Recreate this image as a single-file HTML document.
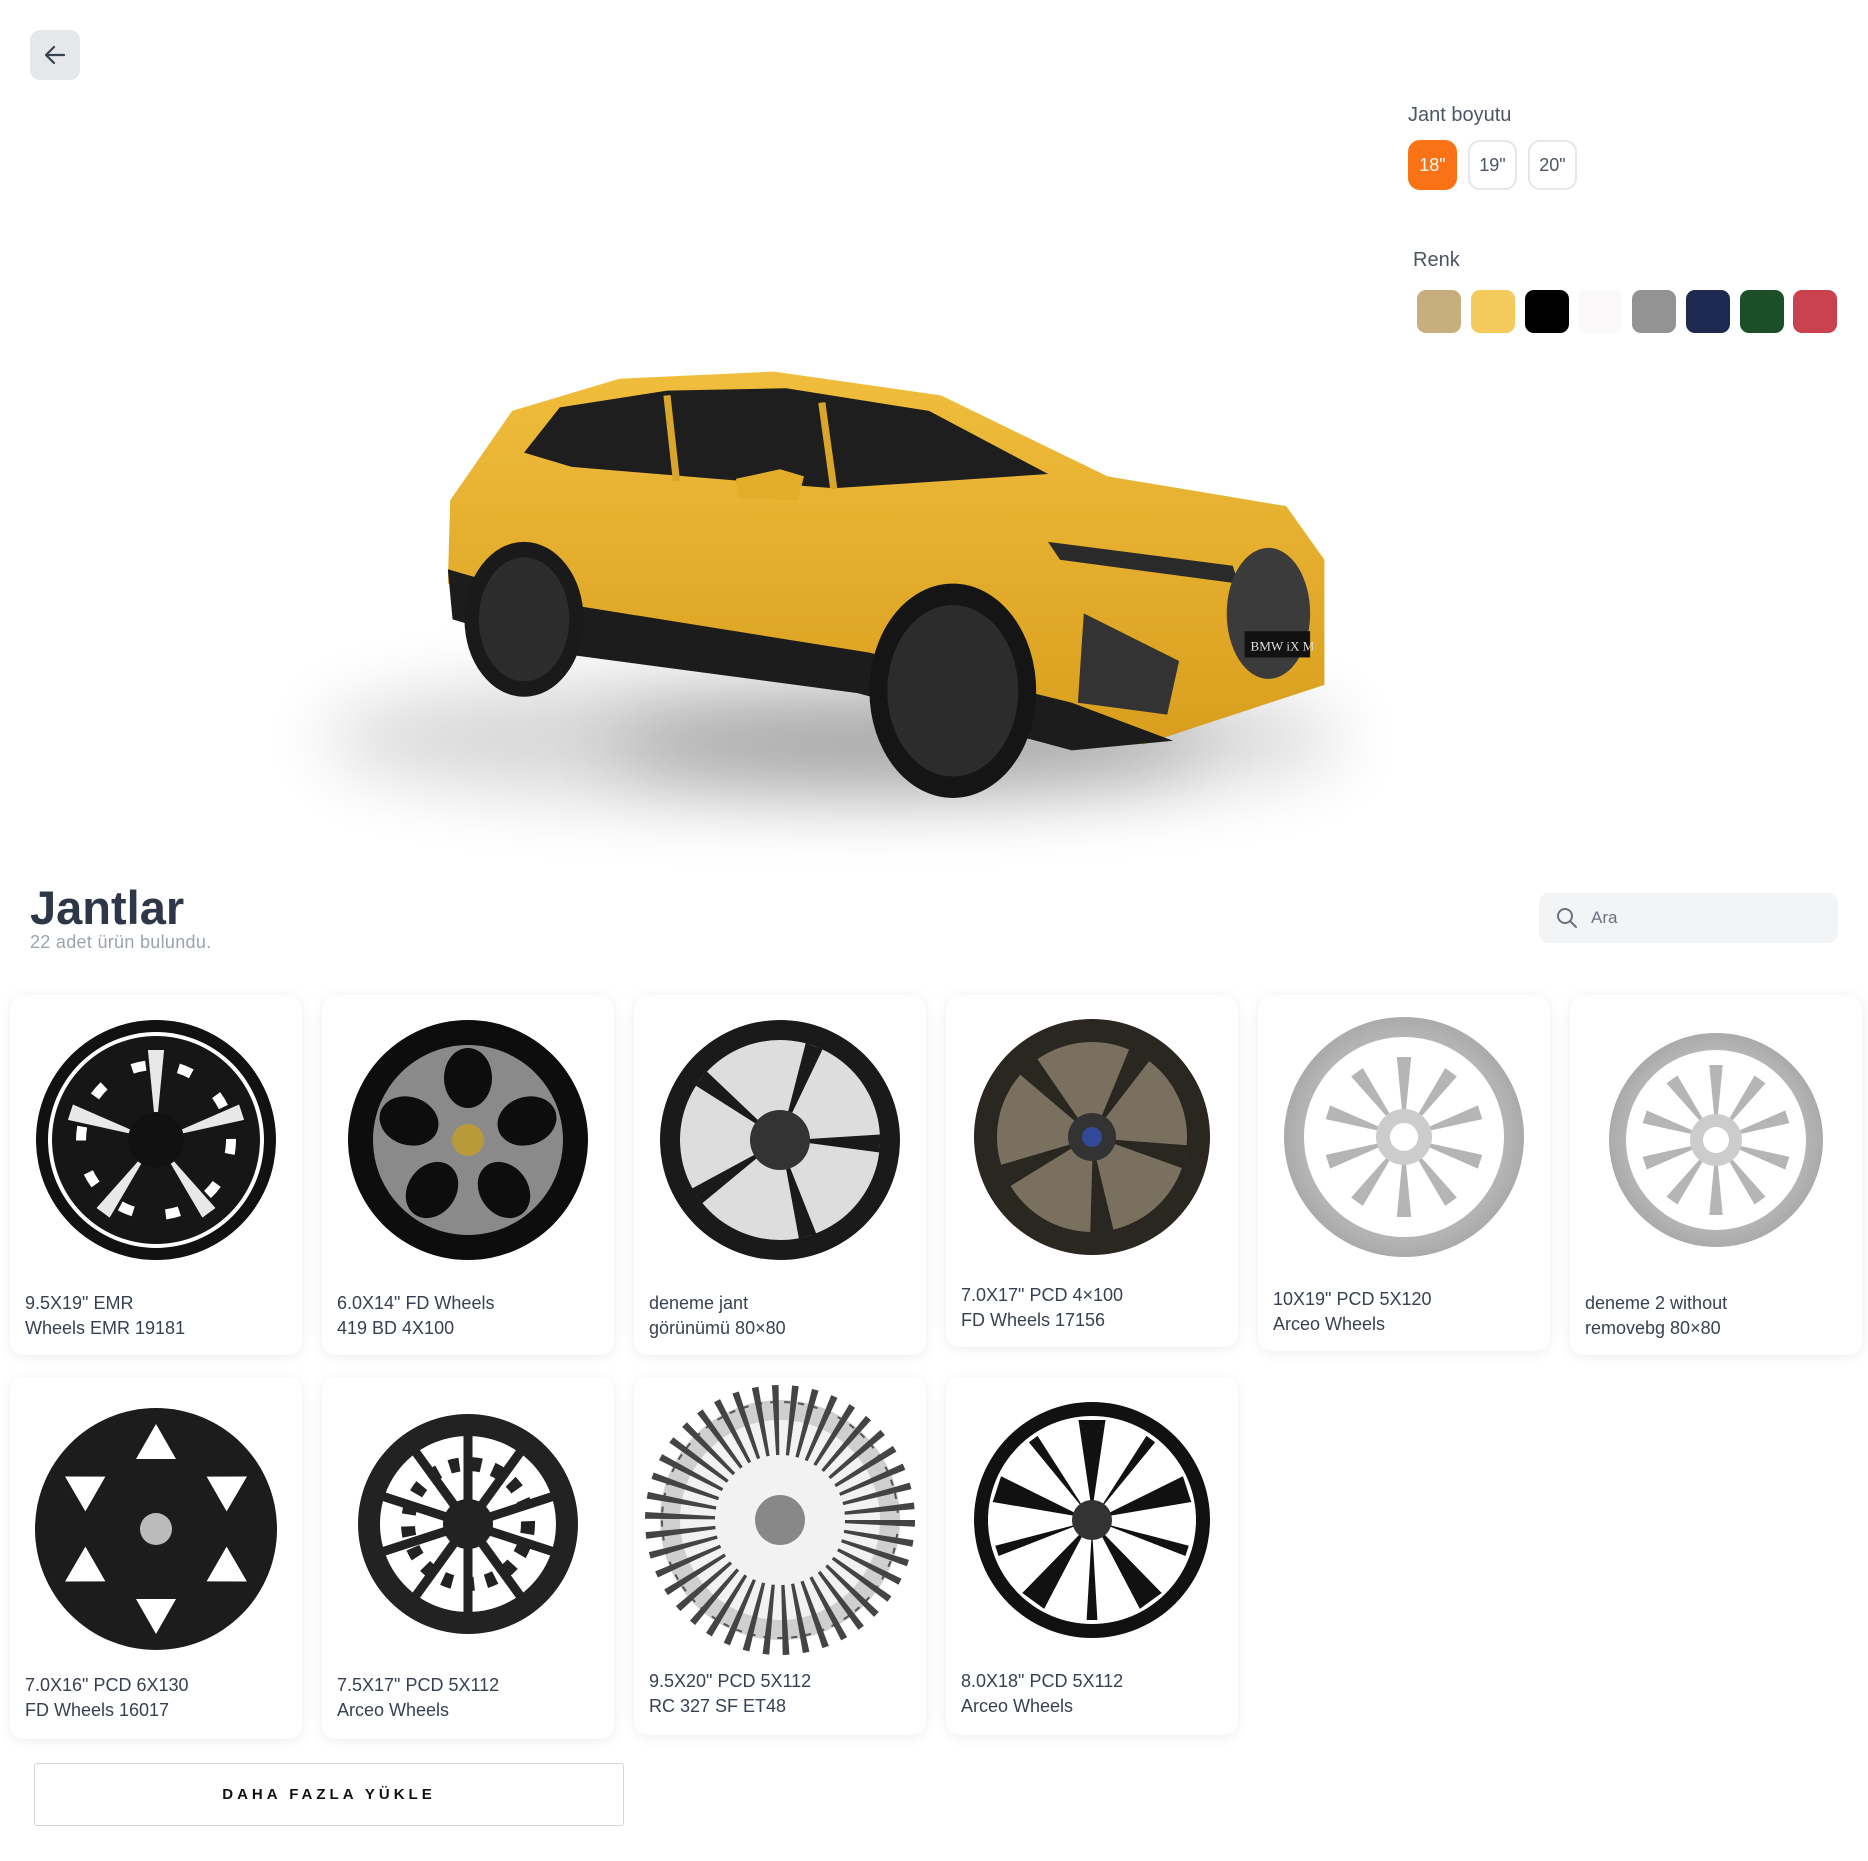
<!DOCTYPE html>
<html><head><meta charset="utf-8">
<style>
*{box-sizing:border-box;margin:0;padding:0}
body{width:1868px;height:1861px;background:#fff;font-family:"Liberation Sans",sans-serif;position:relative;overflow:hidden;color:#374151}
.abs{position:absolute}
.back{left:30px;top:30px;width:50px;height:50px;border-radius:10px;background:#e5e7eb}
.lbl{font-size:20px;color:#4b5563}
.sz{top:140px;width:49px;height:50px;border-radius:12px;border:2px solid #e5e7eb;font-size:18px;color:#4b5563;display:flex;align-items:center;justify-content:center}
.sw{top:290px;width:44px;height:43px;border-radius:9px}
.card{width:292px;background:#fff;border-radius:14px;box-shadow:0 2px 14px rgba(0,0,0,.07)}
.t{position:absolute;left:15px;font-size:18px;line-height:25px;color:#374151}
</style></head><body>
<div class="abs back"><svg width="50" height="50" viewBox="0 0 50 50"><path d="M34 25H17M24 17l-8 8 8 8" stroke="#374151" stroke-width="2.2" fill="none" stroke-linecap="round" stroke-linejoin="round"/></svg></div>

<div class="abs lbl" style="left:1408px;top:104px">Jant boyutu</div>
<div class="abs sz" style="left:1408px;background:#f97316;border-color:#f97316;color:#fff">18"</div>
<div class="abs sz" style="left:1468px">19"</div>
<div class="abs sz" style="left:1528px">20"</div>
<div class="abs lbl" style="left:1413px;top:249px">Renk</div>
<div class="abs sw" style="left:1417px;background:#c9ae7d"></div>
<div class="abs sw" style="left:1471px;background:#f5ca5c"></div>
<div class="abs sw" style="left:1525px;background:#000"></div>
<div class="abs sw" style="left:1578px;background:#faf8f8"></div>
<div class="abs sw" style="left:1632px;background:#939393"></div>
<div class="abs sw" style="left:1686px;background:#1e2a52"></div>
<div class="abs sw" style="left:1740px;background:#1c4f27"></div>
<div class="abs sw" style="left:1793px;background:#c9424e"></div>

<svg class="abs" style="left:0;top:0" width="1868" height="900" viewBox="0 0 1868 900">
<defs><filter id="bl" x="-50%" y="-100%" width="200%" height="300%"><feGaussianBlur stdDeviation="30"/></filter>
<linearGradient id="yg" x1="0" y1="0" x2="0" y2="1"><stop offset="0" stop-color="#f0bd3c"/><stop offset="1" stop-color="#d99e1e"/></linearGradient></defs>
<g transform="scale(1.191)">
<ellipse cx="700" cy="620" rx="430" ry="55" fill="#000" opacity=".16" filter="url(#bl)"/>
<ellipse cx="760" cy="625" rx="250" ry="30" fill="#000" opacity=".25" filter="url(#bl)"/>
<path d="M378 420 L430 345 L520 318 L650 312 L790 332 L930 400 L1080 425 L1112 470 L1112 575 L960 625 L880 600 L730 560 L480 520 L376 490Z" fill="url(#yg)"/>
<path d="M376 478 L480 508 L730 548 L900 590 L985 622 L900 630 L720 582 L480 550 L380 520Z" fill="#1c1c1c"/>
<path d="M440 380 L470 342 L560 328 L660 326 L780 345 L880 398 L700 410 L600 402 L480 392Z" fill="#1e1e1e"/>
<path d="M560 332 L568 404 M690 338 L700 410" stroke="#d9a52a" stroke-width="6"/>
<path d="M880 455 L1035 475 L1040 490 L890 470Z" fill="#2a2a2a"/>
<path d="M910 515 L990 555 L980 600 L905 590Z" fill="#333"/>
<ellipse cx="1065" cy="515" rx="35" ry="55" fill="#3b3b3b"/>
<rect x="1045" y="530" width="55" height="22" fill="#111"/>
<text x="1050" y="546" font-size="11" fill="#ddd" font-family="Liberation Serif">BMW iX M</text>
<path d="M618 402 L655 394 L675 400 L670 420 L620 418Z" fill="#e3ad2a"/>
<ellipse cx="440" cy="520" rx="50" ry="65" fill="#1a1a1a"/>
<ellipse cx="440" cy="520" rx="38" ry="52" fill="#2c2c2c"/>
<ellipse cx="800" cy="580" rx="70" ry="90" fill="#151515"/>
<ellipse cx="800" cy="580" rx="55" ry="72" fill="#2c2c2c"/>
</g>
</svg>

<div class="abs" style="left:30px;top:880px;font-size:47px;font-weight:bold;color:#2d3748">Jantlar</div>
<div class="abs" style="left:30px;top:932px;font-size:18px;color:#9ca3af;letter-spacing:.3px">22 adet ürün bulundu.</div>
<div class="abs" style="left:1539px;top:893px;width:299px;height:50px;border-radius:10px;background:#f3f4f6">
<svg class="abs" style="left:17px;top:14px" width="22" height="22" viewBox="0 0 22 22"><circle cx="9" cy="9" r="7" stroke="#6b7280" stroke-width="2" fill="none"/><path d="M14 14l6 6" stroke="#6b7280" stroke-width="2" stroke-linecap="round"/></svg>
<div class="abs" style="left:52px;top:15px;font-size:17px;color:#6b7280">Ara</div></div>

<svg width="0" height="0" style="position:absolute"><defs>
<g id="sp"><path d="M0 -8 L-9 -100 L9 -100Z"/></g>
</defs></svg>

<div class="abs card" style="left:10px;top:995px;height:360px"><div class="t" style="top:296px">9.5X19" EMR<br>Wheels EMR 19181</div></div>
<div class="abs card" style="left:322px;top:995px;height:360px"><div class="t" style="top:296px">6.0X14" FD Wheels<br>419 BD 4X100</div></div>
<div class="abs card" style="left:634px;top:995px;height:360px"><div class="t" style="top:296px">deneme jant<br>görünümü 80×80</div></div>
<div class="abs card" style="left:946px;top:995px;height:352px"><div class="t" style="top:288px">7.0X17" PCD 4×100<br>FD Wheels 17156</div></div>
<div class="abs card" style="left:1258px;top:995px;height:356px"><div class="t" style="top:292px">10X19" PCD 5X120<br>Arceo Wheels</div></div>
<div class="abs card" style="left:1570px;top:995px;height:360px"><div class="t" style="top:296px">deneme 2 without<br>removebg 80×80</div></div>
<div class="abs card" style="left:10px;top:1377px;height:362px"><div class="t" style="top:296px">7.0X16" PCD 6X130<br>FD Wheels 16017</div></div>
<div class="abs card" style="left:322px;top:1377px;height:362px"><div class="t" style="top:296px">7.5X17" PCD 5X112<br>Arceo Wheels</div></div>
<div class="abs card" style="left:634px;top:1377px;height:358px"><div class="t" style="top:292px">9.5X20" PCD 5X112<br>RC 327 SF ET48</div></div>
<div class="abs card" style="left:946px;top:1377px;height:358px"><div class="t" style="top:292px">8.0X18" PCD 5X112<br>Arceo Wheels</div></div>

<svg class="abs" style="left:0;top:0" width="1868" height="1861" viewBox="0 0 1868 1861">
<defs>
<radialGradient id="sil"><stop offset="0" stop-color="#eee"/><stop offset="1" stop-color="#aaa"/></radialGradient>
</defs>
<g transform="translate(156,1140)"><circle r="120" fill="#111"/><circle r="108" fill="#fff"/><circle r="104" fill="#161616"/><g fill="#fff" opacity=".9"><use href="#sp" transform="rotate(0) scale(.9)"/><use href="#sp" transform="rotate(72) scale(.9)"/><use href="#sp" transform="rotate(144) scale(.9)"/><use href="#sp" transform="rotate(216) scale(.9)"/><use href="#sp" transform="rotate(288) scale(.9)"/></g><circle r="75" fill="none" stroke="#fff" stroke-width="10" stroke-dasharray="14 33"/><circle r="28" fill="#111"/></g>
<g transform="translate(468,1140)"><circle r="120" fill="#0d0d0d"/><circle r="95" fill="#8a8a8a"/><g fill="#0d0d0d"><ellipse cx="0" cy="-62" rx="24" ry="30"/><ellipse cx="59" cy="-19" rx="24" ry="30" transform="rotate(72 59 -19)"/><ellipse cx="36" cy="50" rx="24" ry="30" transform="rotate(144 36 50)"/><ellipse cx="-36" cy="50" rx="24" ry="30" transform="rotate(216 -36 50)"/><ellipse cx="-59" cy="-19" rx="24" ry="30" transform="rotate(288 -59 -19)"/></g><circle r="16" fill="#b89a3a"/></g>
<g transform="translate(780,1140)"><circle r="120" fill="#1a1a1a"/><circle r="100" fill="#ddd"/><g fill="#1a1a1a"><use href="#sp" transform="rotate(20)"/><use href="#sp" transform="rotate(92)"/><use href="#sp" transform="rotate(164)"/><use href="#sp" transform="rotate(236)"/><use href="#sp" transform="rotate(308)"/></g><circle r="30" fill="#333"/></g>
<g transform="translate(1092,1137)"><circle r="118" fill="#2a2620"/><circle r="95" fill="#7a7060"/><g fill="#2a2620"><use href="#sp" transform="rotate(30) scale(1.3 .95)"/><use href="#sp" transform="rotate(102) scale(1.3 .95)"/><use href="#sp" transform="rotate(174) scale(1.3 .95)"/><use href="#sp" transform="rotate(246) scale(1.3 .95)"/><use href="#sp" transform="rotate(318) scale(1.3 .95)"/></g><circle r="24" fill="#333"/><circle r="10" fill="#334a9a"/></g>
<g transform="translate(1404,1137)"><circle r="120" fill="url(#sil)"/><circle r="100" fill="#fff"/><g fill="#b5b5b5"><use href="#sp" transform="rotate(0) scale(.8)"/><use href="#sp" transform="rotate(36) scale(.8)"/><use href="#sp" transform="rotate(72) scale(.8)"/><use href="#sp" transform="rotate(108) scale(.8)"/><use href="#sp" transform="rotate(144) scale(.8)"/><use href="#sp" transform="rotate(180) scale(.8)"/><use href="#sp" transform="rotate(216) scale(.8)"/><use href="#sp" transform="rotate(252) scale(.8)"/><use href="#sp" transform="rotate(288) scale(.8)"/><use href="#sp" transform="rotate(324) scale(.8)"/></g><circle r="28" fill="#ccc"/><circle r="14" fill="#fff"/></g>
<g transform="translate(1716,1140)"><circle r="107" fill="url(#sil)"/><circle r="90" fill="#fff"/><g fill="#b5b5b5"><use href="#sp" transform="rotate(0) scale(.75)"/><use href="#sp" transform="rotate(36) scale(.75)"/><use href="#sp" transform="rotate(72) scale(.75)"/><use href="#sp" transform="rotate(108) scale(.75)"/><use href="#sp" transform="rotate(144) scale(.75)"/><use href="#sp" transform="rotate(180) scale(.75)"/><use href="#sp" transform="rotate(216) scale(.75)"/><use href="#sp" transform="rotate(252) scale(.75)"/><use href="#sp" transform="rotate(288) scale(.75)"/><use href="#sp" transform="rotate(324) scale(.75)"/></g><circle r="26" fill="#ccc"/><circle r="13" fill="#fff"/></g>
<g transform="translate(156,1529)"><circle r="121" fill="#1c1c1c"/><g fill="#fff"><path d="M-20 -70 L20 -70 L0 -105Z"/><path d="M-20 -70 L20 -70 L0 -105Z" transform="rotate(60)"/><path d="M-20 -70 L20 -70 L0 -105Z" transform="rotate(120)"/><path d="M-20 -70 L20 -70 L0 -105Z" transform="rotate(180)"/><path d="M-20 -70 L20 -70 L0 -105Z" transform="rotate(240)"/><path d="M-20 -70 L20 -70 L0 -105Z" transform="rotate(300)"/></g><circle r="16" fill="#bbb"/></g>
<g transform="translate(468,1524)"><circle r="110" fill="#222"/><circle r="95" fill="#fff"/><circle r="92" fill="none" stroke="#222" stroke-width="8"/><g stroke="#222" stroke-width="9"><path d="M0 0V-92" transform="rotate(0)"/><path d="M0 0V-92" transform="rotate(36)"/><path d="M0 0V-92" transform="rotate(72)"/><path d="M0 0V-92" transform="rotate(108)"/><path d="M0 0V-92" transform="rotate(144)"/><path d="M0 0V-92" transform="rotate(180)"/><path d="M0 0V-92" transform="rotate(216)"/><path d="M0 0V-92" transform="rotate(252)"/><path d="M0 0V-92" transform="rotate(288)"/><path d="M0 0V-92" transform="rotate(324)"/></g><circle r="60" fill="none" stroke="#222" stroke-width="14" stroke-dasharray="10 12"/><circle r="25" fill="#222"/></g>
<g transform="translate(780,1520)"><circle r="120" fill="#cfcfcf"/><circle r="118" fill="none" stroke="#555" stroke-width="2" stroke-dasharray="6 8"/><circle r="100" fill="#f2f2f2"/><circle r="100" fill="none" stroke="#444" stroke-width="70" stroke-dasharray="5 10"/><circle r="25" fill="#888"/></g>
<g transform="translate(1092,1520)"><circle r="118" fill="#111"/><circle r="104" fill="#fff"/><g fill="#111"><use href="#sp" transform="rotate(0) scale(1.5 1)"/><use href="#sp" transform="rotate(36) scale(.6 1)"/><use href="#sp" transform="rotate(72) scale(1.5 1)"/><use href="#sp" transform="rotate(108) scale(.6 1)"/><use href="#sp" transform="rotate(144) scale(1.5 1)"/><use href="#sp" transform="rotate(180) scale(.6 1)"/><use href="#sp" transform="rotate(216) scale(1.5 1)"/><use href="#sp" transform="rotate(252) scale(.6 1)"/><use href="#sp" transform="rotate(288) scale(1.5 1)"/><use href="#sp" transform="rotate(324) scale(.6 1)"/></g><circle r="20" fill="#333"/></g>
</svg>

<div class="abs" style="left:34px;top:1763px;width:590px;height:63px;border:1px solid #d1d5db;border-radius:3px;display:flex;align-items:center;justify-content:center;font-size:15px;font-weight:bold;letter-spacing:4px;color:#111">DAHA FAZLA YÜKLE</div>
</body></html>
